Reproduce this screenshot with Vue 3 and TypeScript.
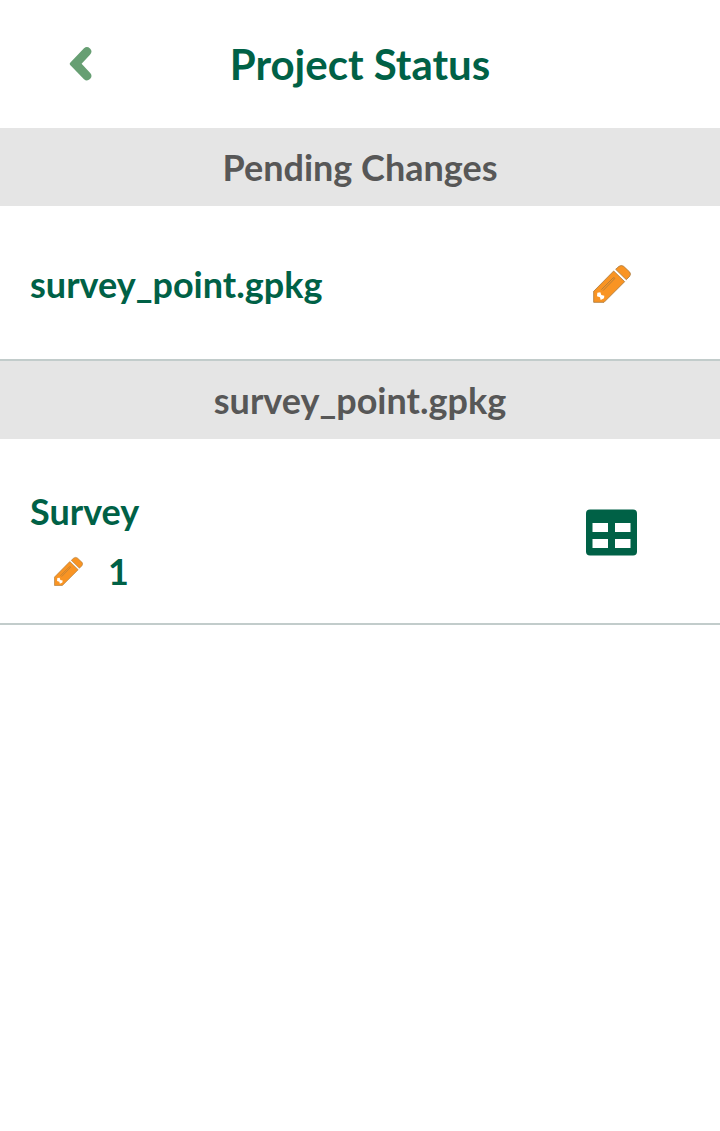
<script setup lang="ts">
import { defineComponent, h } from 'vue'

interface Layer { name: string; updates: number }

const fileName = 'survey_point.gpkg'
const layers: Layer[] = [{ name: 'Survey', updates: 1 }]

const PencilIcon = defineComponent({
  render: () =>
    h('svg', { viewBox: '0 0 114 114', 'aria-hidden': 'true' }, [
      h('g', { fill: '#f99423', stroke: '#ad7b3c', 'stroke-width': 2.5, 'stroke-linejoin': 'round' }, [
        h('path', { d: 'M2 79 62 18 95 50 33 112H2Z' }),
        h('path', { d: 'M68 13 78 4Q85 -1 92 4L110 21Q115 27 110 34L100 44Z' }),
        h('path', { d: 'M26 73 60 39Q65 36 65 41L31 76', 'stroke-width': 2.5, 'stroke-linecap': 'round' }),
      ]),
      h('path', { d: 'M13 83 22 82 25 90 34 92 33 100 23 105 21 97 12 94Z', fill: '#fff' }),
    ]),
})
</script>

<template>
  <main class="screen">
    <header class="header">
      <button class="back" aria-label="Back">
        <svg viewBox="0 0 24 36"><path d="M1.400 16.400 15 2.300Q18 -.2 21 2.500 24 5.500 21 8.800L12.600 17.800 21 26.800Q24 30 21 33 18 35.800 15 33.300L1.400 19.200Q0 17.800 1.400 16.400Z" /></svg>
      </button>
      <h1 class="title">Project Status</h1>
    </header>
    <h2 class="section">Pending Changes</h2>
    <div class="row file">
      <span class="name">{{ fileName }}</span>
      <PencilIcon class="pencil" />
    </div>
    <h2 class="section">{{ fileName }}</h2>
    <div v-for="layer in layers" :key="layer.name" class="row layer">
      <div class="info">
        <span class="name">{{ layer.name }}</span>
        <div class="count">
          <PencilIcon class="pencil small" />
          <span class="name">{{ layer.updates }}</span>
        </div>
      </div>
      <svg class="table" viewBox="0 0 51 47">
        <rect y=".5" width="51" height="46" rx="4" fill="#006146" />
        <path d="M6.500 14h15.500v9H6.500ZM29 14h15.500v9H29ZM6.500 30h15.500v9H6.500ZM29 30h15.500v9H29Z" fill="#fff" />
      </svg>
    </div>
  </main>
</template>

<style scoped>
.screen {
  min-height: 1131px;
  background: #fff;
  color: #006146;
  font-family: Lato, sans-serif;
  font-weight: 700;
}
.header {
  display: grid;
  grid-template-columns: 120px 1fr 120px;
  align-items: center;
  height: 128px;
}
.back {
  display: flex;
  width: 24px;
  height: 36px;
  margin: 0 0 0 68.500px;
  padding: 0;
  border: 0;
  background: none;
}
.back svg { width: 24px; height: 36px; }
.back path { fill: #679f73; }
.title {
  margin: 0;
  font-size: 42px;
  line-height: 50px;
  font-weight: 700;
  text-align: center;
}
.section {
  box-sizing: border-box;
  height: 78px;
  margin: 0;
  padding-top: 2px;
  background: #e5e5e5;
  color: #575757;
  font-size: 36px;
  line-height: 75px;
  font-weight: 700;
  text-align: center;
}
.row {
  box-sizing: border-box;
  display: flex;
  justify-content: space-between;
  border-bottom: 2px solid #c2cccb;
}
.file { height: 155px; padding: 56px 89.500px 0 30px; }
.layer { height: 186px; padding: 50px 83px 0 30px; }
.name { font-size: 36px; line-height: 44px; }
.pencil { width: 38px; height: 38px; overflow: visible; }
.pencil.small { width: 29px; height: 29px; }
.file .pencil { margin-top: 2.500px; }
.count { display: flex; align-items: center; gap: 25px; margin: 16px 0 0 24px; }
.info { display: flex; flex-direction: column; }
.table { width: 51px; height: 47px; margin-top: 20px; }
</style>
